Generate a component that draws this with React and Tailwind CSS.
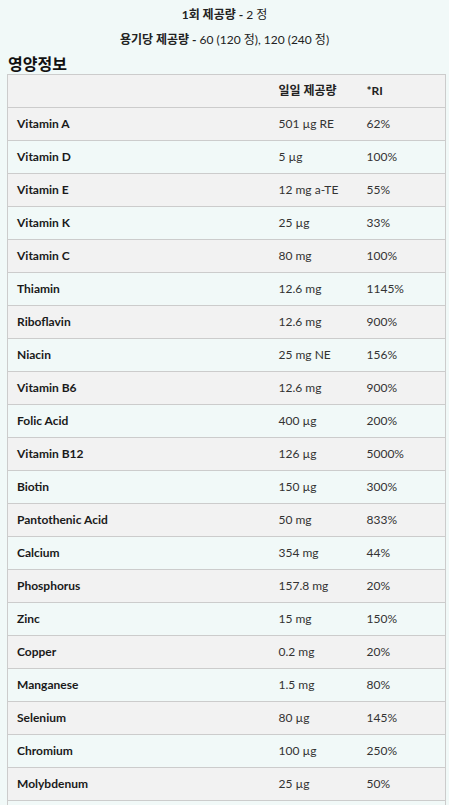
const rows = [
  ["Vitamin A", "501 µg RE", "62%"],
  ["Vitamin D", "5 µg", "100%"],
  ["Vitamin E", "12 mg a-TE", "55%"],
  ["Vitamin K", "25 µg", "33%"],
  ["Vitamin C", "80 mg", "100%"],
  ["Thiamin", "12.6 mg", "1145%"],
  ["Riboflavin", "12.6 mg", "900%"],
  ["Niacin", "25 mg NE", "156%"],
  ["Vitamin B6", "12.6 mg", "900%"],
  ["Folic Acid", "400 µg", "200%"],
  ["Vitamin B12", "126 µg", "5000%"],
  ["Biotin", "150 µg", "300%"],
  ["Pantothenic Acid", "50 mg", "833%"],
  ["Calcium", "354 mg", "44%"],
  ["Phosphorus", "157.8 mg", "20%"],
  ["Zinc", "15 mg", "150%"],
  ["Copper", "0.2 mg", "20%"],
  ["Manganese", "1.5 mg", "80%"],
  ["Selenium", "80 µg", "145%"],
  ["Chromium", "100 µg", "250%"],
  ["Molybdenum", "25 µg", "50%"],
  ["", "", ""],
];

export default function App() {
  return (
    <div
      className="min-h-screen bg-[#f1f9f8] px-[7px] pt-[5px] pb-8 text-[12px] text-[#222]"
      style={{ fontFamily: "Lato, 'Noto Sans CJK KR', sans-serif" }}
    >
      <p className="text-center leading-[20px]">
        <span className="font-bold">1회 제공량 -</span> 2 정
      </p>
      <p className="text-center leading-[20px] mt-[5px]">
        <span className="font-bold">용기당 제공량 -</span> 60 (120 정), 120 (240 정)
      </p>
      <h3 className="text-[16px] font-bold leading-[20px] mt-[4px] ml-px text-[#111]">영양정보</h3>
      <table className="w-[438px] border-collapse border border-[#cccccc] table-fixed">
        <colgroup>
          <col className="w-[262px]" />
          <col className="w-[88px]" />
          <col className="w-[88px]" />
        </colgroup>
        <thead>
          <tr className="bg-[#f2f2f2]">
            <th className="h-[33px]"></th>
            <th className="h-[33px] pl-[9px] text-left font-bold">일일 제공량</th>
            <th className="h-[33px] pl-[9px] text-left font-bold">*RI</th>
          </tr>
        </thead>
        <tbody>
          {rows.map(([name, amount, ri], i) => (
            <tr
              key={i}
              className={`border-t border-[#cccccc] ${i % 2 === 0 ? "bg-[#f2f2f2]" : "bg-[#f1f9f8]"}`}
            >
              <td className="h-[33px] pl-[9px] font-bold text-[#1a1a1a]">{name}</td>
              <td className="h-[33px] pl-[9px] text-[#333]">{amount}</td>
              <td className="h-[33px] pl-[9px] text-[#333]">{ri}</td>
            </tr>
          ))}
        </tbody>
      </table>
    </div>
  );
}
